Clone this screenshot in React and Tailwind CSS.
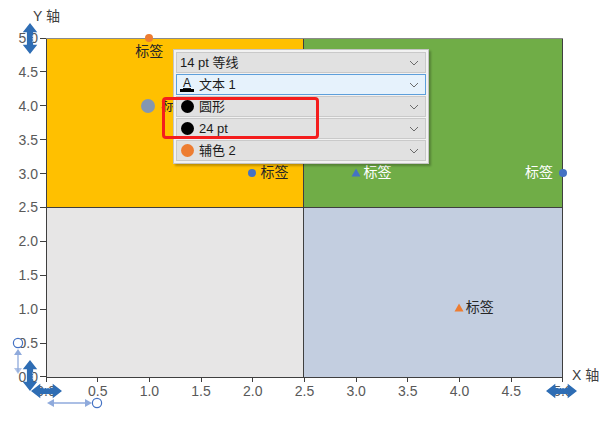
import React from "react";

const TICKS = ["0.0","0.5","1.0","1.5","2.0","2.5","3.0","3.5","4.0","4.5","5.0"];
const PX = (v) => v * 103.2;
const PY = (v) => 338 - v * 67.6;

function ThickArrow({ vertical }) {
  return (
    <svg width={vertical ? 16 : 31} height={vertical ? 31 : 16} viewBox={vertical ? "0 0 15 30" : "0 0 30 15"}>
      <g transform={vertical ? "rotate(90 7.5 7.5)" : undefined}>
        <path d="M0,7.5 L9,0.5 L9,4.5 L21,4.5 L21,0.5 L30,7.5 L21,14.5 L21,10.5 L9,10.5 L9,14.5 Z" fill="#2E6DB4" />
        <path d="M12,5 L13.5,5 M14.5,5 L16,5 M17,5 L18.5,5" stroke="#ffffff" strokeWidth="0.8" opacity="0.6" />
      </g>
    </svg>
  );
}

function Chevron() {
  return (
    <svg width="10" height="6" viewBox="0 0 10 6" className="shrink-0">
      <path d="M1,1 L5,5 L9,1" fill="none" stroke="#6b6b6b" strokeWidth="1" />
    </svg>
  );
}

function Row({ icon, label, active }) {
  return (
    <div
      className={
        "flex h-[21px] items-center gap-[5px] border pl-[3px] pr-[6px] " +
        (active ? "border-[#5d9fdb] bg-[#e6f2fc]" : "border-[#c9c9c9] bg-[#e1e1e1]")
      }
    >
      {icon && <div className="flex w-[14px] justify-center">{icon}</div>}
      <span className="flex-1 text-[13px] leading-none text-[#1b1b1b]">{label}</span>
      <Chevron />
    </div>
  );
}

const Dot = ({ c }) => <div className={"h-[13px] w-[13px] rounded-full " + c} />;

function Label({ children, white, style }) {
  return (
    <span className={"absolute text-[14px] leading-none " + (white ? "text-white" : "text-[#262626]")} style={style}>
      {children}
    </span>
  );
}

export default function App() {
  return (
    <div
      className="relative h-[421px] w-[615px] overflow-hidden bg-white"
      style={{ fontFamily: '"Liberation Sans", "Noto Sans CJK SC", sans-serif' }}
    >
      <div className="flex pt-[38px]">
        {/* y axis labels */}
        <div className="-mt-[9px] flex h-[357px] w-[46px] flex-col-reverse justify-between">
          {TICKS.map((t) => (
            <div key={"y" + t} className="flex h-[18px] items-center">
              <span className="w-[38px] text-right text-[14px] leading-[18px] text-[#595959]">{t}</span>
              <div className="ml-[2px] h-px w-[6px] bg-[#3f3f3f]" />
            </div>
          ))}
        </div>

        <div className="flex flex-col">
          {/* plot area */}
          <div className="relative h-[339px] w-[517px]">
            <div className="grid h-full w-full grid-cols-[258px_259px] grid-rows-[169px_170px] border-t border-[#8a8a8a]">
              <div className="border-l border-r border-b border-[#3f3f3f] bg-[#FFC000]" />
              <div className="border-r border-b border-[#3f3f3f] bg-[#70AD47]" />
              <div className="border-l border-r border-b border-[#3f3f3f] bg-[#E7E6E6]" />
              <div className="border-r border-b border-[#3f3f3f] bg-[#C3CEE0]" />
            </div>

            {/* data points */}
            <div className="absolute h-[8px] w-[8px] rounded-full bg-[#ED7D31]" style={{ left: PX(1) - 4, top: -4 }} />
            <Label style={{ left: PX(1) - 14, top: 6 }}>标签</Label>

            <div className="absolute h-[14px] w-[14px] rounded-full bg-[#8497B0]" style={{ left: PX(1) - 8, top: PY(4) - 7 }} />
            <Label style={{ left: PX(1) + 12, top: PY(4) - 8 }}>标签</Label>

            <div className="absolute h-[8px] w-[8px] rounded-full bg-[#4472C4]" style={{ left: PX(2) - 4, top: PY(3) - 4 }} />
            <Label style={{ left: PX(2) + 8, top: PY(3) - 8 }}>标签</Label>

            <svg className="absolute" width="10" height="9" style={{ left: PX(3) - 5, top: PY(3) - 5 }} viewBox="0 0 10 9">
              <path d="M5,0.5 L9.5,8.5 L0.5,8.5 Z" fill="#4472C4" />
            </svg>
            <Label white style={{ left: PX(3) + 8, top: PY(3) - 8 }}>标签</Label>

            <Label white style={{ left: PX(5) - 37, top: PY(3) - 8 }}>标签</Label>
            <div className="absolute h-[8px] w-[8px] rounded-full bg-[#4472C4]" style={{ left: PX(5) - 3, top: PY(3) - 4 }} />

            <svg className="absolute" width="10" height="9" style={{ left: PX(4) - 5, top: PY(1) - 5 }} viewBox="0 0 10 9">
              <path d="M5,0.5 L9.5,8.5 L0.5,8.5 Z" fill="#ED7D31" />
            </svg>
            <Label style={{ left: PX(4) + 7, top: PY(1) - 8 }}>标签</Label>
          </div>

          {/* x axis labels */}
          <div className="-ml-[20px] flex w-[557px] justify-between">
            {TICKS.map((t) => (
              <div key={"x" + t} className="flex w-[40px] flex-col items-center">
                <div className="h-[5px] w-px bg-[#3f3f3f]" />
                <span className="text-[14px] leading-[18px] text-[#595959]">{t}</span>
              </div>
            ))}
          </div>
        </div>
      </div>

      {/* axis titles */}
      <span className="absolute left-[33px] top-[9px] text-[14px] leading-none text-[#404040]">Y 轴</span>
      <span className="absolute left-[572px] top-[368px] text-[14px] leading-none text-[#404040]">X 轴</span>

      {/* selection handles */}
      <div className="absolute left-[22px] top-[23px]"><ThickArrow vertical /></div>
      <div className="absolute left-[22px] top-[360px]"><ThickArrow vertical /></div>
      <div className="absolute left-[31px] top-[383px]"><ThickArrow /></div>
      <div className="absolute left-[546px] top-[383px]"><ThickArrow /></div>

      <svg className="absolute left-0 top-[330px]" width="110" height="91" viewBox="0 0 110 91">
        <circle cx="18" cy="13" r="4.6" fill="white" stroke="#4472C4" strokeWidth="1.2" />
        <line x1="18" y1="21" x2="18" y2="42" stroke="#8FAADC" strokeWidth="1.3" />
        <path d="M14,25 L18,19 L22,25 Z" fill="#8FAADC" />
        <path d="M14,38 L18,44 L22,38 Z" fill="#8FAADC" opacity="0.7" />
        <line x1="50" y1="73" x2="88" y2="73" stroke="#8FAADC" strokeWidth="1.3" />
        <path d="M54,69 L47,73 L54,77 Z" fill="#8FAADC" />
        <path d="M85,69 L92,73 L85,77 Z" fill="#8FAADC" />
        <circle cx="97" cy="73" r="4.6" fill="white" stroke="#4472C4" strokeWidth="1.2" />
      </svg>

      {/* floating format toolbar */}
      <div className="absolute left-[173px] top-[49px] w-[256px] border border-[#c4c4c4] bg-[#f2f2f2] p-[2px] shadow-[2px_2px_2px_rgba(0,0,0,0.25)]">
        <div className="flex flex-col gap-px">
          <Row label="14 pt 等线" />
          <Row
            active
            icon={
              <div className="flex flex-col items-center">
                <span className="text-[12px] leading-[11px] text-[#1b1b1b] underline">A</span>
                <div className="h-[3px] w-[14px] bg-black" />
              </div>
            }
            label="文本 1"
          />
          <Row icon={<Dot c="bg-black" />} label="圆形" />
          <Row icon={<Dot c="bg-black" />} label="24 pt" />
          <Row icon={<Dot c="bg-[#ED7D31]" />} label="辅色 2" />
        </div>
      </div>

      <div className="absolute left-[162px] top-[97px] h-[42px] w-[157px] rounded-[4px] border-[3px] border-[#f41d1d]" />
    </div>
  );
}
